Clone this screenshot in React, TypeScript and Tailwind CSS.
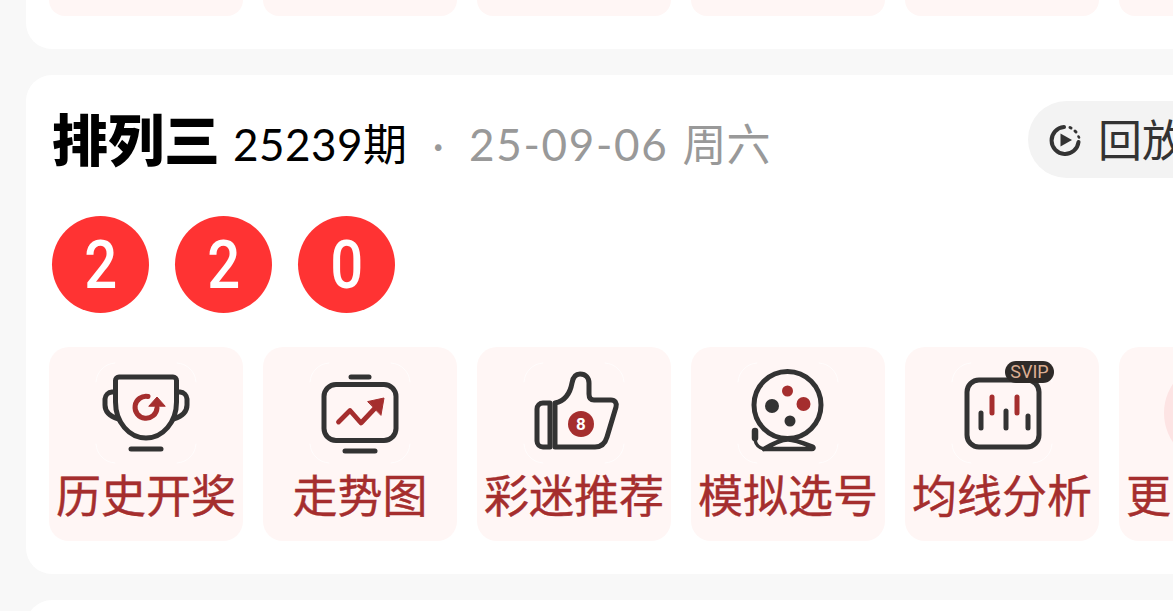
const INK = "#333333";
const RED = "#a52e2e";

// Faint white corner marks that frame every tile icon
function Corners() {
  return (
    <g fill="none" stroke="#ffffff" strokeWidth="1" opacity="0.8">
      <path d="M1 20 A20 20 0 0 1 20 1" />
      <path d="M82 1 A20 20 0 0 1 101 20" />
      <path d="M101 82 A20 20 0 0 1 82 101" />
      <path d="M20 101 A20 20 0 0 1 1 82" />
    </g>
  );
}

function Trophy() {
  return (
    <svg viewBox="0 0 102 102" className="w-[102px] h-[102px]" fill="none" strokeLinecap="round" strokeLinejoin="round">
      <Corners />
      <g stroke={INK} strokeWidth="5">
        <path d="M24 15 H78 A3.5 3.5 0 0 1 81.5 18.5 V40 C81.5 60 68 76 51 76 C34 76 20.5 60 20.5 40 V18.5 A3.5 3.5 0 0 1 24 15 Z" />
        <path d="M20 30 H17 A7.5 7.5 0 0 0 10 37 V43 C10 49 14 54 23 57" />
        <path d="M82 30 H85 A7.5 7.5 0 0 1 92 37 V43 C92 49 88 54 79 57" />
      </g>
      <path d="M36 87 H66" stroke={INK} strokeWidth="5" />
      <path d="M53 34.5 A11 11 0 1 0 62 46" stroke={RED} strokeWidth="5" />
      <path d="M54 44 L62 35 L70 44 Z" fill={RED} stroke={RED} strokeWidth="1" />
    </svg>
  );
}

function TrendScreen() {
  return (
    <svg viewBox="0 0 102 102" className="w-[102px] h-[102px]" fill="none" strokeLinecap="round" strokeLinejoin="round">
      <Corners />
      <rect x="15" y="22.5" width="72" height="56" rx="12" stroke={INK} strokeWidth="5" />
      <path d="M42 15 H60" stroke={INK} strokeWidth="5" />
      <path d="M36 89 H66" stroke={INK} strokeWidth="5" />
      <path d="M29.5 60 L41 48.5 L52 61 L69 43" stroke={RED} strokeWidth="4.8" />
      <path d="M59 39.5 L75 36 L72 53 Z" fill={RED} stroke={RED} strokeWidth="1" />
    </svg>
  );
}

function ThumbBall() {
  return (
    <svg viewBox="0 0 102 102" className="w-[102px] h-[102px]" fill="none" strokeLinecap="round" strokeLinejoin="round">
      <Corners />
      <g stroke={INK} strokeWidth="5">
        <path d="M27 41 H20 A6 6 0 0 0 14 47 V79 A6 6 0 0 0 20 85 H27 Z" />
        <path d="M32 41 C42 39 47 32 49 21 C50 15 53 12 57 12 C63 12 66 16 66 21 V32 C66 36 68 38 71 38 H88 C92 38 94 41 93 45 L84 75 C82 82 78 85 72 85 H32 Z" />
      </g>
      <circle cx="58" cy="62" r="13" fill={RED} />
      <text x="58" y="68" textAnchor="middle" fontSize="17" fontWeight="700" fill="#ffffff" fontFamily="Roboto, sans-serif">8</text>
    </svg>
  );
}

function LotteryDrum() {
  return (
    <svg viewBox="0 0 102 102" className="w-[102px] h-[102px]" fill="none" strokeLinecap="round" strokeLinejoin="round">
      <Corners />
      <circle cx="50.5" cy="43" r="33.5" stroke={INK} strokeWidth="5" />
      <circle cx="50.5" cy="29" r="5.5" fill={RED} />
      <circle cx="66.5" cy="42" r="7" fill={RED} />
      <circle cx="35" cy="44" r="7" fill={INK} />
      <circle cx="53" cy="59" r="5.5" fill={INK} />
      <path d="M27 87 C37 81 44 77.5 51 77.5 C58 77.5 66 81 76 85 C77 86 76 87 75 87 H27" stroke={INK} strokeWidth="4.6" />
      <path d="M18 69 V76" stroke={INK} strokeWidth="6.5" />
      <path d="M18 78 C19 83 22 86 27 87" stroke={INK} strokeWidth="3.4" />
    </svg>
  );
}

function CandleChart() {
  return (
    <svg viewBox="0 0 102 102" className="w-[102px] h-[102px]" fill="none" strokeLinecap="round" strokeLinejoin="round">
      <Corners />
      <rect x="16" y="18" width="72" height="67" rx="12" stroke={INK} strokeWidth="5" />
      <g strokeWidth="5">
        <path d="M30 51 V66" stroke={INK} />
        <path d="M41 35 V51" stroke={RED} />
        <path d="M55 49 V66" stroke={INK} />
        <path d="M66 35 V51" stroke={RED} />
        <path d="M77 54 V66" stroke={INK} />
      </g>
    </svg>
  );
}

function ReplayIcon() {
  return (
    <svg viewBox="0 0 32 32" className="w-8 h-8 shrink-0" fill="none" strokeLinecap="round">
      <path d="M15 3 A13.5 13.5 0 1 0 29.5 18" stroke={INK} strokeWidth="4" />
      <path d="M21 3.5 L22 4" stroke={INK} strokeWidth="3" />
      <path d="M26 7 L27 8" stroke={INK} strokeWidth="3" />
      <path d="M29.5 12.5 L30 13.5" stroke={INK} strokeWidth="2.6" />
      <path d="M11.5 9.5 L23 16 L11.5 22.5 Z" fill={INK} />
    </svg>
  );
}

const tools = [
  { label: "历史开奖", icon: <Trophy /> },
  { label: "走势图", icon: <TrendScreen /> },
  { label: "彩迷推荐", icon: <ThumbBall /> },
  { label: "模拟选号", icon: <LotteryDrum /> },
  { label: "均线分析", icon: <CandleChart />, vip: true },
  {
    label: "更多工具",
    icon: <div className="w-[104px] h-[104px] rounded-full bg-[#fde4e4]" />,
  },
];

function Tile({ label, icon, vip }: { label: string; icon: React.ReactNode; vip?: boolean }) {
  return (
    <div className="relative w-[194px] h-[194px] shrink-0 rounded-[20px] bg-[#fff6f5] flex flex-col items-center pt-[15px]">
      <div className="h-[102px] flex items-center">{icon}</div>
      {vip && (
        <span className="absolute left-[100px] top-[14px] w-[49px] h-[22px] rounded-full bg-[#2e2a28] flex items-center justify-center text-[18px] leading-none text-[#dcae92] font-['Roboto',sans-serif]">
          SVIP
        </span>
      )}
      <span className="mt-[3px] text-[45px] leading-[58px] [-webkit-text-stroke:0.4px_#a52e2e] whitespace-nowrap text-[#a52e2e]">{label}</span>
    </div>
  );
}

function Ball({ value }: { value: number }) {
  return (
    <div className="w-[97px] h-[97px] rounded-full bg-[#ff3333] flex items-center justify-center pt-[3px]">
      <span className="text-[66px] leading-none font-medium text-white scale-x-[0.88] font-['Roboto',sans-serif]">{value}</span>
    </div>
  );
}

export default function App() {
  return (
    <div className="h-[611px] overflow-hidden bg-[#f8f8f8] flex flex-col gap-[26px] pl-[26px] font-['Lato','Noto_Sans_CJK_SC',sans-serif]">
      {/* Tail of the card above */}
      <section className="w-[1210px] h-[49px] shrink-0 bg-white rounded-b-[26px] flex gap-5 pl-[23px]">
        {Array.from({ length: 6 }).map((_, i) => (
          <div key={i} className="w-[194px] h-4 shrink-0 rounded-b-[20px] bg-[#fff6f5]" />
        ))}
      </section>

      {/* 排列三 draw result */}
      <section className="w-[1210px] h-[499px] shrink-0 bg-white rounded-[26px] pt-[26px] pl-[23px]">
        <header className="flex items-center h-[77px]">
          <h1 className="ml-[3px] text-[56px] leading-none font-black text-black whitespace-nowrap">排列三</h1>
          <span className="ml-[13px] mt-[8px] text-[44px] leading-none tracking-[0.5px] text-black whitespace-nowrap">25239期</span>
          <span className="ml-[25px] mt-[8px] text-[44px] leading-none text-[#999999] whitespace-nowrap">·</span>
          <span className="ml-[25px] mt-[8px] text-[44px] leading-none tracking-[1.7px] text-[#999999] whitespace-nowrap">25-09-06</span>
          <span className="ml-[14px] mt-[8px] text-[44px] leading-none text-[#999999] whitespace-nowrap">周六</span>
          <div className="ml-auto mr-[23px] h-[77px] rounded-full bg-[#f3f3f3] flex items-center gap-[17px] pl-[21px] pr-[27px]">
            <ReplayIcon />
            <span className="text-[44px] leading-none text-[#333333] whitespace-nowrap">回放</span>
          </div>
        </header>

        <div className="flex gap-[26px] mt-[38px] ml-[3px]">
          <Ball value={2} />
          <Ball value={2} />
          <Ball value={0} />
        </div>

        <div className="flex gap-5 mt-[34px]">
          {tools.map((t) => (
            <Tile key={t.label} {...t} />
          ))}
        </div>
      </section>

      {/* Top of the card below */}
      <section className="w-[1210px] h-[60px] shrink-0 bg-white rounded-t-[26px]" />
    </div>
  );
}
